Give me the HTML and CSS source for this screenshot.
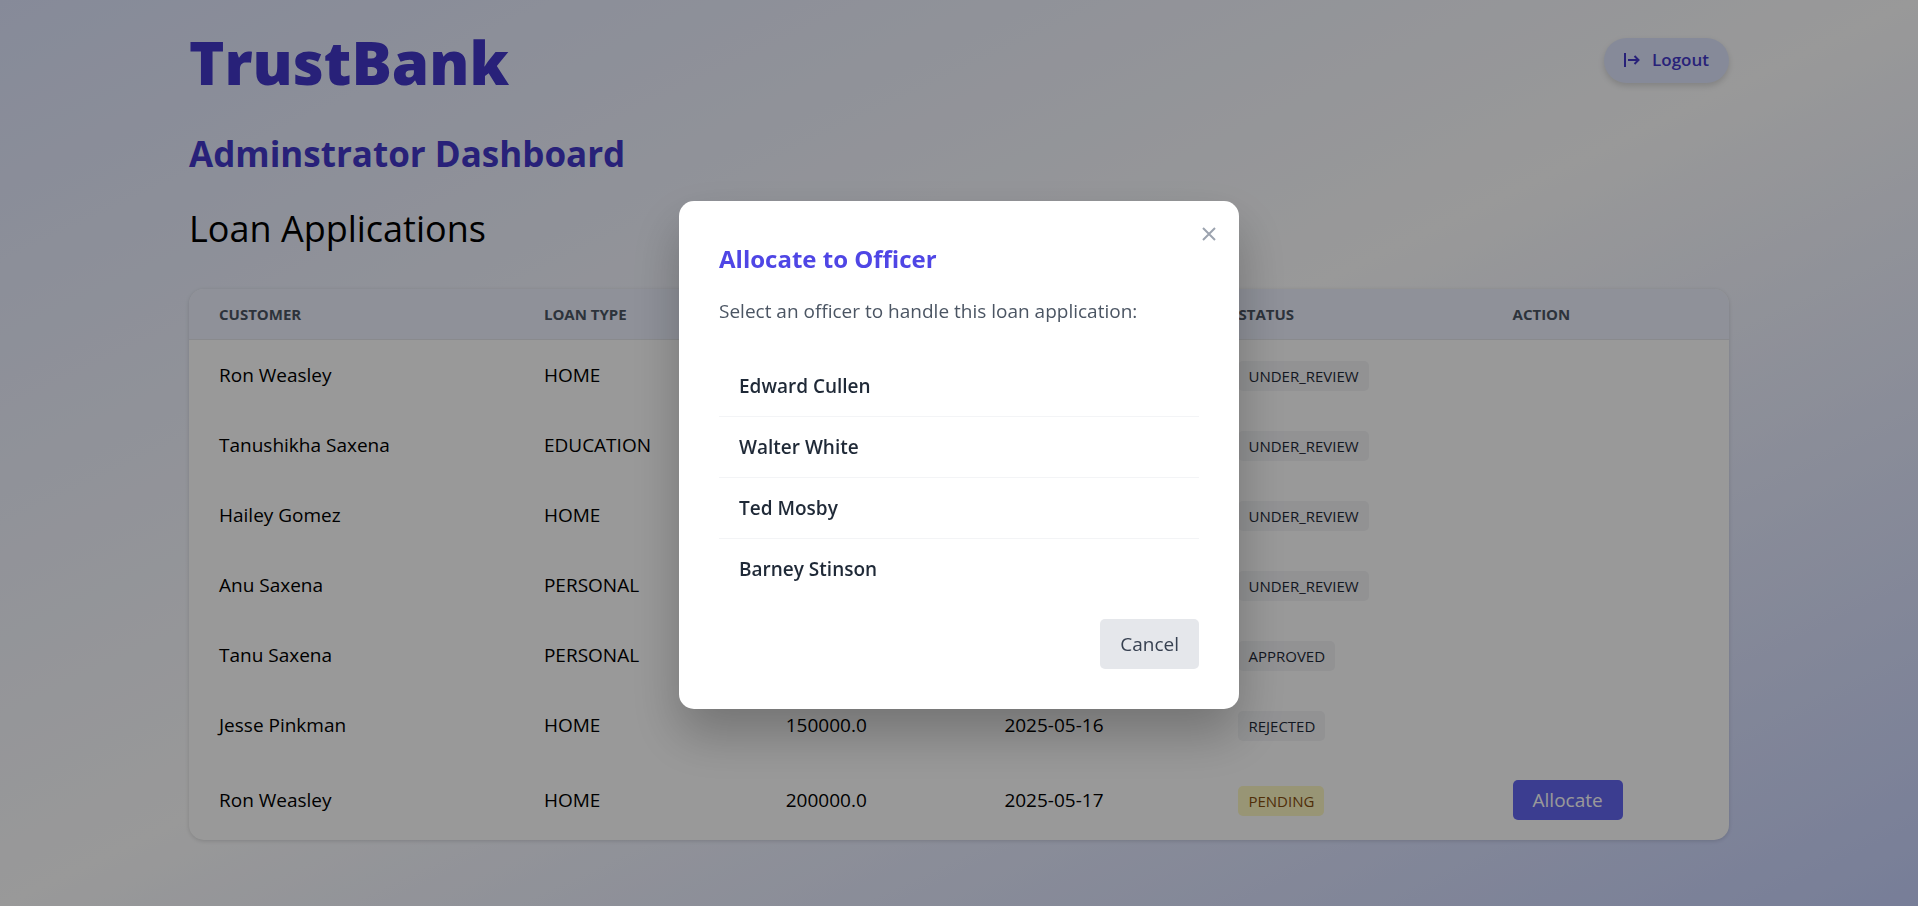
FILE: index.html
```html
<!DOCTYPE html>
<html lang="en">
<head>
<meta charset="utf-8">
<title>TrustBank</title>
<link rel="stylesheet" href="styles.css">
</head>
<body>
<div class="page">
  <header class="topbar">
    <h1 class="brand">TrustBank</h1>
    <button class="logout" type="button">
      <svg class="logout-icon" viewBox="0 0 16 14" aria-hidden="true"><path d="M1 0v14M4 7h11M10.500 3l4 4-4 4"/></svg>
      <span>Logout</span>
    </button>
  </header>
  <h2 class="title">Adminstrator Dashboard</h2>
  <h3 class="subtitle">Loan Applications</h3>
  <div class="card">
    <table class="loans">
      <colgroup>
        <col class="c-customer"><col class="c-type"><col class="c-amount"><col class="c-date"><col class="c-status"><col class="c-action">
      </colgroup>
      <thead>
        <tr><th>Customer</th><th>Loan Type</th><th></th><th></th><th>Status</th><th>Action</th></tr>
      </thead>
      <tbody>
        <tr><td>Ron Weasley</td><td>HOME</td><td></td><td></td><td><span class="badge">UNDER_REVIEW</span></td><td></td></tr>
        <tr><td>Tanushikha Saxena</td><td>EDUCATION</td><td></td><td></td><td><span class="badge">UNDER_REVIEW</span></td><td></td></tr>
        <tr><td>Hailey Gomez</td><td>HOME</td><td></td><td></td><td><span class="badge">UNDER_REVIEW</span></td><td></td></tr>
        <tr><td>Anu Saxena</td><td>PERSONAL</td><td></td><td></td><td><span class="badge">UNDER_REVIEW</span></td><td></td></tr>
        <tr><td>Tanu Saxena</td><td>PERSONAL</td><td></td><td></td><td><span class="badge">APPROVED</span></td><td></td></tr>
        <tr><td>Jesse Pinkman</td><td>HOME</td><td>150000.0</td><td>2025-05-16</td><td><span class="badge">REJECTED</span></td><td></td></tr>
        <tr><td>Ron Weasley</td><td>HOME</td><td>200000.0</td><td>2025-05-17</td><td><span class="badge pending">PENDING</span></td><td><button class="allocate" type="button">Allocate</button></td></tr>
      </tbody>
    </table>
  </div>
</div>
<div class="overlay">
  <div class="modal" role="dialog" aria-modal="true" aria-labelledby="modal-title">
    <button class="close" type="button" aria-label="Close"><svg class="close-icon" viewBox="0 0 14 14" aria-hidden="true"><path d="M1 1l12 12M13 1l-12 12"/></svg></button>
    <h2 class="modal-title" id="modal-title">Allocate to Officer</h2>
    <p class="modal-text">Select an officer to handle this loan application:</p>
    <ul class="officers">
      <li><button class="officer" type="button">Edward Cullen</button></li>
      <li><button class="officer" type="button">Walter White</button></li>
      <li><button class="officer" type="button">Ted Mosby</button></li>
      <li><button class="officer" type="button">Barney Stinson</button></li>
    </ul>
    <div class="modal-actions"><button class="cancel" type="button">Cancel</button></div>
  </div>
</div>
</body>
</html>
```

FILE: styles.css
```css
* { box-sizing: border-box; margin: 0; padding: 0; }

body {
  font-family: "Open Sans", "Noto Sans", sans-serif;
  font-size: 19px;
  line-height: 30px;
  color: #000;
}

button { font: inherit; border: 0; cursor: pointer; }

.page {
  min-height: 100vh;
  padding: 30px max(30px, calc(50% - 770px));
  background: linear-gradient(to bottom right, #e0e7ff, #fff, #c7d2fe);
}

.topbar { display: flex; justify-content: space-between; align-items: center; height: 60px; }

.brand { padding-top: 3px; font-size: 60px; font-weight: 800; line-height: 60px; color: #4338ca; }

.logout {
  display: flex;
  align-items: center;
  gap: 12px;
  height: 45px;
  padding: 0 20px;
  border-radius: 24px;
  background: #e0e7ff;
  color: #4338ca;
  font-size: 17px;
  font-weight: 600;
  box-shadow: 0 3px 6px rgba(0, 0, 0, 0.15);
}

.logout-icon { width: 16px; height: 14px; fill: none; stroke: #4338ca; stroke-width: 2; }

.title { margin-top: 41px; font-size: 35px; font-weight: 700; line-height: 45px; color: #4338ca; }

.subtitle { margin-top: 30px; font-size: 36px; font-weight: 400; line-height: 45px; }

.card {
  margin-top: 38px;
  border-radius: 15px;
  overflow: hidden;
  background: #fff;
  box-shadow: 0 1px 4px rgba(0, 0, 0, 0.15);
}

.loans { width: 100%; table-layout: fixed; border-collapse: collapse; text-align: left; }
.c-customer { width: 21.1%; }
.c-type { width: 15.7%; }
.c-amount { width: 14.2%; }
.c-date { width: 15.2%; }
.c-status { width: 17.8%; }
.c-action { width: 16%; }

.loans th {
  height: 50px;
  padding: 0 30px;
  border-bottom: 1px solid #e5e7eb;
  background: #eef2ff;
  color: #4b5563;
  font-size: 15px;
  font-weight: 700;
  line-height: 20px;
  text-transform: uppercase;
}

.loans td { padding: 20px 30px; }

.badge {
  display: inline-block;
  padding: 5px 10px;
  margin: -5px 0;
  border-radius: 5px;
  background: #f3f4f6;
  color: #1f2937;
  font-size: 15px;
  font-weight: 500;
  line-height: 20px;
}

.pending { background: #fef9c3; color: #854d0e; }

.allocate {
  display: block;
  height: 40px;
  padding: 0 20px;
  border-radius: 5px;
  background: #6366f1;
  color: #fff;
}

.overlay {
  position: fixed;
  inset: 0;
  display: flex;
  align-items: center;
  justify-content: center;
  padding-top: 4px;
  background: rgba(0, 0, 0, 0.4);
}

.modal {
  position: relative;
  width: 560px;
  padding: 40px;
  border-radius: 15px;
  background: #fff;
  box-shadow: 0 25px 50px rgba(0, 0, 0, 0.25);
}

.close {
  position: absolute;
  top: 18px;
  right: 15px;
  display: grid;
  place-items: center;
  width: 30px;
  height: 30px;
  background: none;
}

.close-icon { width: 14px; height: 14px; fill: none; stroke: #9ca3af; stroke-width: 2; }

.modal-title { font-size: 24px; font-weight: 700; line-height: 35px; color: #4f46e5; }
.modal-text { margin: 20px 0 30px; color: #4b5563; }

.officers { list-style: none; }
.officers li + li { border-top: 1px solid #f3f4f6; }

.officer {
  display: block;
  width: 100%;
  padding: 15px 20px;
  background: none;
  color: #1f2937;
  font-weight: 600;
  text-align: left;
}

.modal-actions { display: flex; justify-content: flex-end; margin-top: 20px; }

.cancel {
  height: 50px;
  padding: 0 20px;
  border-radius: 5px;
  background: #e5e7eb;
  color: #374151;
}
```
